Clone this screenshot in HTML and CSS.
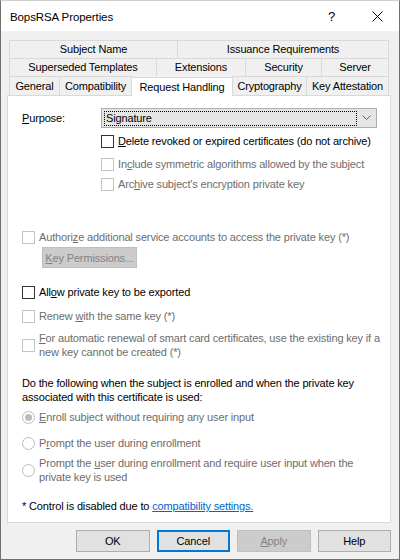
FILE: index.html
```html
<!DOCTYPE html>
<html>
<head>
<meta charset="utf-8">
<link rel="stylesheet" href="styles.css">
</head>
<body>
<div class="window">
  <div class="titlebar">
    <span class="title">BopsRSA Properties</span>
    <span class="qmark">?</span>
    <span class="close"><svg width="11" height="11" viewBox="0 0 11 11"><path d="M0.5 0.5 L10.5 10.5 M10.5 0.5 L0.5 10.5" stroke="#000" stroke-width="1"/></svg></span>
  </div>
  <div class="client">
    <div class="tabs">
      <div class="tabrow">
        <div class="tab w-subject">Subject Name</div>
        <div class="tab w-issuance">Issuance Requirements</div>
      </div>
      <div class="tabrow">
        <div class="tab w-superseded">Superseded Templates</div>
        <div class="tab w-extensions">Extensions</div>
        <div class="tab w-security">Security</div>
        <div class="tab w-server">Server</div>
      </div>
      <div class="tabrow last">
        <div class="tab w-general">General</div>
        <div class="tab w-compat">Compatibility</div>
        <div class="tab w-request selected">Request Handling</div>
        <div class="tab w-crypto">Cryptography</div>
        <div class="tab w-keyatt">Key Attestation</div>
      </div>
    </div>
    <div class="panel">
      <div class="purpose">
        <span class="plabel"><u>P</u>urpose:</span>
        <div class="combo">
          <span class="focus">Signature</span>
          <svg class="chev" width="9" height="6" viewBox="0 0 9 6"><path d="M0.5 0.5 L4.5 4.5 L8.5 0.5" fill="none" stroke="#606060" stroke-width="1"/></svg>
        </div>
      </div>
      <div class="opt indent m7"><span class="box"></span><span><u>D</u>elete revoked or expired certificates (do not archive)</span></div>
      <div class="opt indent dis m10"><span class="box"></span><span>In<u>c</u>lude symmetric algorithms allowed by the subject</span></div>
      <div class="opt indent dis m7"><span class="box"></span><span>Arc<u>h</u>ive subject's encryption private key</span></div>

      <div class="opt dis m40"><span class="box"></span><span>Authori<u>z</u>e additional service accounts to access the private key (*)</span></div>
      <div class="btn disabled keyperm"><span><u>K</u>ey Permissions...</span></div>

      <div class="opt m18"><span class="box"></span><span>All<u>o</u>w private key to be exported</span></div>
      <div class="opt dis m11"><span class="box"></span><span>Renew <u>w</u>ith the same key (*)</span></div>
      <div class="opt dis two m8"><span class="box"></span><span><u>F</u>or automatic renewal of smart card certificates, use the existing key if a<br>new key cannot be created (*)</span></div>

      <p class="para">Do the following when the subject is enrolled and when the private key<br>associated with this certificate is used:</p>

      <div class="opt dis m7"><span class="radio checked"></span><span><u>E</u>nroll subject without requiring any user input</span></div>
      <div class="opt dis m13"><span class="radio"></span><span>P<u>r</u>ompt the user during enrollment</span></div>
      <div class="opt dis two m6"><span class="radio"></span><span>Prompt the <u>u</u>ser during enrollment and require user input when the<br>private key is used</span></div>

      <p class="note">* Control is disabled due to <span class="link">compatibility settings.</span></p>
    </div>
    <div class="buttons">
      <div class="btn">OK</div>
      <div class="btn default">Cancel</div>
      <div class="btn disabled"><span><u>A</u>pply</span></div>
      <div class="btn">Help</div>
    </div>
  </div>
</div>
</body>
</html>
```

FILE: styles.css
```css
* { box-sizing: border-box; }
html, body { margin: 0; padding: 0; }
body {
  font-family: "Liberation Sans", Arial, sans-serif;
  font-size: 11px;
  letter-spacing: -0.15px;
  color: #000;
  background: #f0f0f0;
}
.window {
  width: 400px;
  height: 560px;
  border: 1px solid #707070;
  border-top: 1px solid #d0d0d0;
  background: #f0f0f0;
  display: flex;
  flex-direction: column;
}
.titlebar {
  height: 30px;
  background: #fff;
  display: flex;
  align-items: center;
  position: relative;
  flex: none;
}
.title {
  font-size: 11.5px;
  letter-spacing: -0.1px;
  margin-left: 9px;
  padding-top: 1px;
}
.qmark {
  margin-left: auto;
  font-size: 13px;
  margin-right: 37px;
}
.close {
  display: flex;
  margin-right: 16px;
}
.client {
  padding: 9px 8px 0 6px;
  display: flex;
  flex-direction: column;
}
.tabs {
  margin-left: 2px;
  width: 380px;
}
.tabrow {
  display: flex;
  height: 18px;
}
.tabrow.last { height: 19px; align-items: flex-end; }
.tab {
  height: 18px;
  border: 1px solid #d9d9d9;
  border-bottom: none;
  background: #f0f0f0;
  display: flex;
  align-items: center;
  justify-content: center;
  white-space: nowrap;
  margin-left: -1px;
  padding-bottom: 1px;
}
.tab:first-child { margin-left: 0; }
.tabrow.last .tab { height: 19px; padding-bottom: 0; }
.tab.selected {
  background: #fff;
  height: 22px;
  margin-bottom: -1px;
  position: relative;
  z-index: 2;
  padding-bottom: 5px;
}
.w-subject { width: 169px; }
.w-issuance { width: 212px; }
.w-superseded { width: 148px; }
.w-extensions { width: 90px; }
.w-security { width: 77px; }
.w-server { width: 68px; }
.w-general { width: 51px; }
.w-compat { width: 73px; }
.w-request { width: 102px; }
.w-crypto { width: 75px; }
.w-keyatt { width: 83px; }

.panel {
  width: 384px;
  height: 428px;
  background: #fff;
  border: 1px solid #d9d9d9;
  padding-left: 14px;
  position: relative;
  z-index: 1;
}
.purpose {
  margin-top: 12px;
  display: flex;
  align-items: center;
  height: 20px;
}
.plabel { width: 79px; }
.combo {
  width: 276px;
  height: 20px;
  background: #e5e5e5;
  border: 1px solid #adadad;
  display: flex;
  align-items: center;
  padding: 0 2px;
}
.focus {
  flex: 1;
  height: 15px;
  border: 1px dotted #000;
  line-height: 13px;
  padding-left: 1px;
}
.chev { margin-left: 5px; margin-right: 3px; }

.opt {
  display: flex;
  align-items: center;
  line-height: 13px;
  white-space: nowrap;
}
.opt.two { line-height: 14px; }
.opt.indent { margin-left: 79px; }
.box {
  width: 13px;
  height: 13px;
  border: 1px solid #333;
  background: #fff;
  flex: none;
  margin-right: 4px;
}
.radio {
  width: 13px;
  height: 13px;
  border: 1px solid #bcbcbc;
  border-radius: 50%;
  flex: none;
  margin-right: 4px;
  display: flex;
  align-items: center;
  justify-content: center;
}
.radio.checked::after {
  content: "";
  width: 7px;
  height: 7px;
  border-radius: 50%;
  background: #bcbcbc;
}
.opt.dis { color: #6d6d6d; }
.opt.dis .box { border-color: #c4c4c4; }
.m6 { margin-top: 6px; }
.m7 { margin-top: 7px; }
.m8 { margin-top: 8px; }
.m10 { margin-top: 10px; }
.m11 { margin-top: 11px; }
.m13 { margin-top: 13px; }
.m18 { margin-top: 18px; }
.m40 { margin-top: 40px; }

.btn {
  width: 74px;
  height: 22px;
  background: #e1e1e1;
  border: 1px solid #adadad;
  display: flex;
  align-items: center;
  justify-content: center;
}
.btn.default { border: 2px solid #0078d7; }
.btn.disabled {
  background: #cccccc;
  border-color: #bfbfbf;
  color: #838383;
}
.keyperm {
  width: 95px;
  height: 21px;
  margin-top: 3px;
  margin-left: 20px;
}
.para {
  margin: 17px 0 0 0;
  line-height: 14px;
}
.note {
  margin: 16px 0 0 0;
  line-height: 13px;
}
.link {
  color: #0066cc;
  text-decoration: underline;
}
.buttons {
  display: flex;
  gap: 7px;
  margin-top: 7px;
  margin-left: 69px;
}
```
